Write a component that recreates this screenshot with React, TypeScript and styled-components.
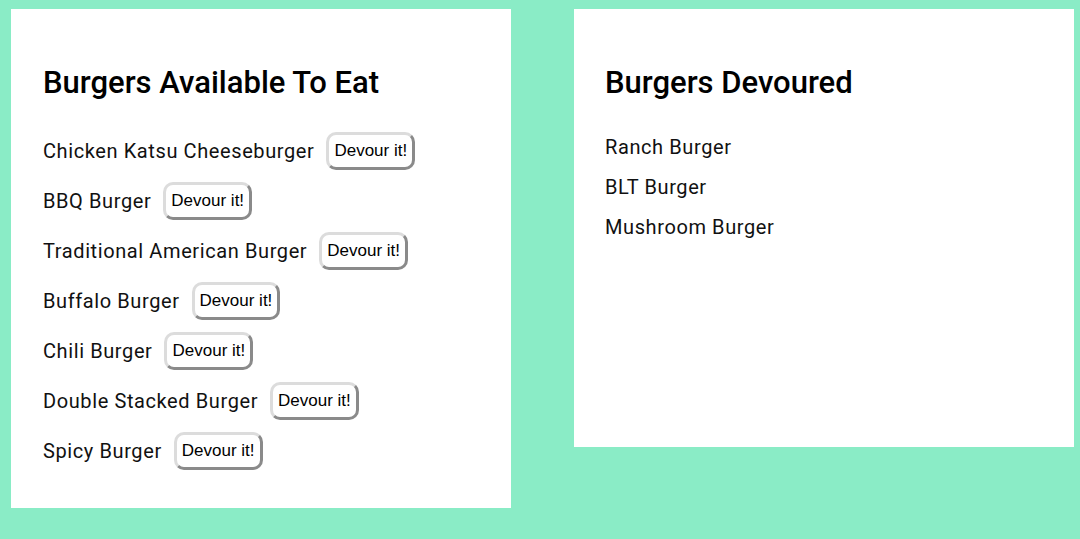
import React from "react";
import styled, { createGlobalStyle } from "styled-components";

const Global = createGlobalStyle`
  html, body { margin: 0; padding: 0; background: #8aecc6; }
  body { font-family: Roboto, "Noto Sans", sans-serif; color: #111; }
`;

const Page = styled.div`
  display: flex;
  align-items: flex-start;
  gap: 63px;
  padding: 9px 0 0 11px;
  min-height: 539px;
  box-sizing: border-box;
`;

const Card = styled.section<{ $h: number; $pl: number }>`
  width: 500px;
  height: ${(p) => p.$h}px;
  box-sizing: border-box;
  background: #fff;
  padding: 56px 32px 0 ${(p) => p.$pl}px;
`;

const Title = styled.h2`
  margin: 0 0 31px 0;
  font-family: Roboto, sans-serif;
  font-weight: 500;
  font-size: 31px;
  line-height: 36px;
  color: #000;
`;

const List = styled.ul<{ $gap: number }>`
  list-style: none;
  margin: 0;
  padding: 0;
  display: flex;
  flex-direction: column;
  gap: ${(p) => p.$gap}px;
`;

const Item = styled.li<{ $h: number }>`
  display: flex;
  align-items: center;
  gap: 12px;
  height: ${(p) => p.$h}px;
  font-size: 20px;
  letter-spacing: 0.6px;
  color: #111;
`;

const Button = styled.button`
  font-family: "Liberation Sans", Arial, sans-serif;
  font-size: 17px;
  letter-spacing: 0;
  color: #000;
  background: #fff;
  border: 3px solid;
  border-color: #dcdcdc #8a8a8a #8a8a8a #dcdcdc;
  border-radius: 10px;
  padding: 0 5px;
  height: 38px;
  cursor: pointer;
`;

const available = [
  "Chicken Katsu Cheeseburger",
  "BBQ Burger",
  "Traditional American Burger",
  "Buffalo Burger",
  "Chili Burger",
  "Double Stacked Burger",
  "Spicy Burger",
];

const devoured = ["Ranch Burger", "BLT Burger", "Mushroom Burger"];

export default function App() {
  return (
    <>
      <Global />
      <Page>
        <Card $h={499} $pl={32}>
          <Title>Burgers Available To Eat</Title>
          <List $gap={12}>
            {available.map((b) => (
              <Item key={b} $h={38}>
                {b}
                <Button>Devour it!</Button>
              </Item>
            ))}
          </List>
        </Card>
        <Card $h={438} $pl={31}>
          <Title>Burgers Devoured</Title>
          <List $gap={10}>
            {devoured.map((b) => (
              <Item key={b} $h={30}>
                {b}
              </Item>
            ))}
          </List>
        </Card>
      </Page>
    </>
  );
}
